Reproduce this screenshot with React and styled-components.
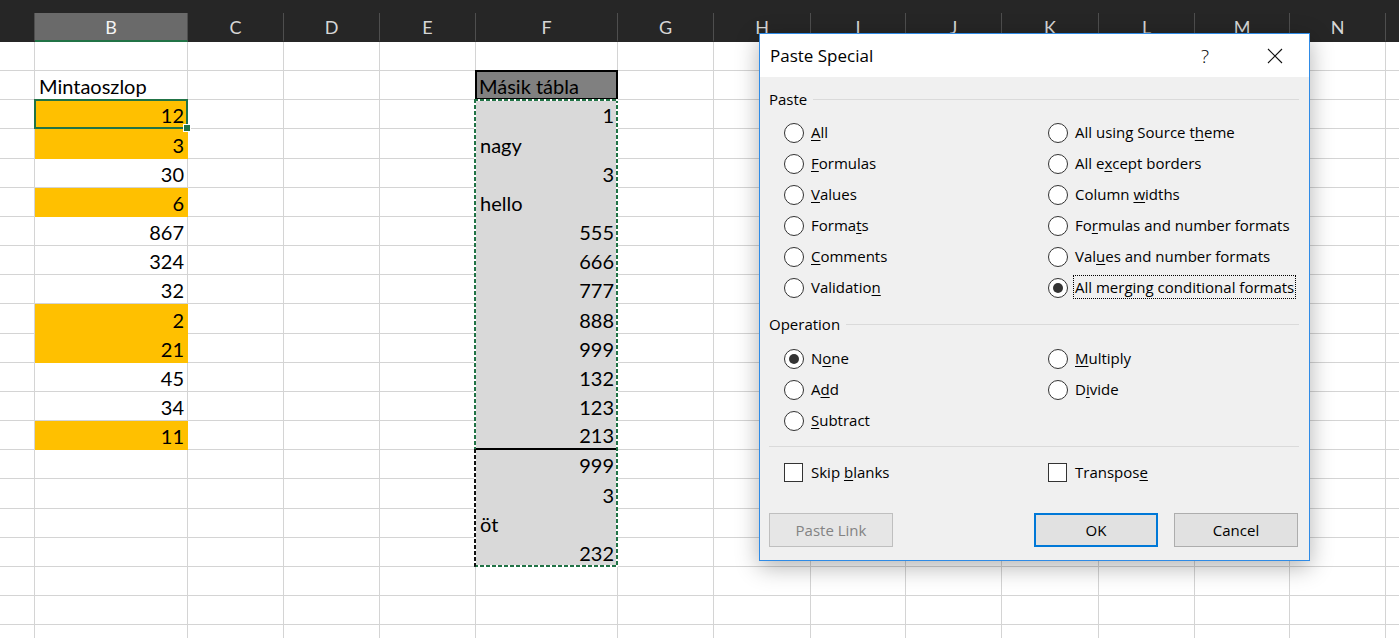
import React from 'react';
import styled, { createGlobalStyle } from 'styled-components';

const GlobalStyle = createGlobalStyle`
  html, body { margin: 0; padding: 0; background: #fff; }
  body { width: 1399px; height: 638px; overflow: hidden; }
`;

const SHEET_FONT = `Lato, "Liberation Sans", sans-serif`;
const UI_FONT = `"Open Sans", "Noto Sans", "Liberation Sans", sans-serif`;
const ROW_H = 29.17;
const ROWS = 21;

const Page = styled.div`
  position: relative;
  width: 1399px;
  height: 638px;
  overflow: hidden;
  background: #fff;
`;

const TopStrip = styled.div`
  height: 13px;
  background: #262626;
`;

const Sheet = styled.div`
  display: flex;
  align-items: flex-start;
`;

const Column = styled.div`
  flex: 0 0 ${(p) => p.$w}px;
  width: ${(p) => p.$w}px;
  display: flex;
  flex-direction: column;
`;

const ColHeader = styled.div`
  box-sizing: border-box;
  height: 29px;
  display: flex;
  align-items: center;
  justify-content: center;
  background: ${(p) => (p.$active ? '#6a6a6a' : '#262626')};
  color: ${(p) => (p.$active ? '#f4f4f4' : '#d6d6d6')};
  border-right: 1px solid #4e4e4e;
  border-bottom: 2px solid ${(p) => (p.$active ? '#217346' : '#262626')};
  font-family: ${SHEET_FONT};
  font-size: 18px;
  padding-top: 1px;
`;

const Cell = styled.div`
  position: relative;
  box-sizing: border-box;
  height: ${ROW_H}px;
  display: flex;
  align-items: flex-end;
  justify-content: ${(p) => (p.$num ? 'flex-end' : 'flex-start')};
  padding: 0 3px 1px 4px;
  background: ${(p) => p.$fill || '#fff'};
  border-right: 1px solid ${(p) => p.$fill || '#d4d4d4'};
  border-bottom: ${(p) =>
    p.$thick ? '2px solid #000' : `1px solid ${p.$fill || '#d4d4d4'}`};
  font-family: ${SHEET_FONT};
  font-size: 20px;
  line-height: 24px;
  color: #000;
  white-space: nowrap;
`;

const TableHead = styled(Cell)`
  z-index: 2;
  padding-left: 3px;
  &::after {
    content: '';
    position: absolute;
    left: -1px;
    right: -1px;
    top: -1px;
    bottom: -1px;
    border: 2px solid #000;
  }
`;

const Selection = styled.div`
  position: absolute;
  left: -1px;
  right: -1px;
  top: -1px;
  bottom: -1px;
  border: 2px solid #217346;
  pointer-events: none;
  z-index: 3;
`;

const FillHandle = styled.div`
  position: absolute;
  right: -5px;
  bottom: -5px;
  width: 6px;
  height: 6px;
  background: #217346;
  border: 1px solid #fff;
`;

const CopyRange = styled.div`
  position: relative;
  display: flex;
  flex-direction: column;
`;

const dash = (dir, c) =>
  `repeating-linear-gradient(${dir}, ${c} 0 4px, #fff 4px 6px)`;

const Marquee = styled.div`
  position: absolute;
  left: -2px;
  right: 0;
  top: -1px;
  bottom: 0;
  pointer-events: none;
  z-index: 4;
  background:
    ${dash('180deg', '#111')} left bottom / 2px ${ROW_H * 4 + 1}px no-repeat,
    ${dash('90deg', '#217346')} left top / 100% 2px no-repeat,
    ${dash('90deg', '#217346')} left bottom / 100% 2px no-repeat,
    ${dash('180deg', '#217346')} right top / 2px 100% no-repeat,
    ${dash('180deg', '#217346')} left top / 2px 100% no-repeat;
`;

/* ---------- dialog ---------- */

const Dialog = styled.div`
  position: absolute;
  left: 759px;
  top: 33px;
  width: 551px;
  height: 528px;
  box-sizing: border-box;
  border: 1px solid #2f8be6;
  background: #f0f0f0;
  box-shadow: 0 6px 22px rgba(0, 0, 0, 0.3);
  display: flex;
  flex-direction: column;
  font-family: ${UI_FONT};
  font-size: 15px;
  color: #000;
  z-index: 10;
`;

const TitleBar = styled.div`
  height: 43px;
  flex: 0 0 43px;
  background: #fff;
  display: flex;
  align-items: center;
  padding: 0 11px 0 10px;
`;

const Title = styled.div`
  font-size: 17px;
  flex: 1;
  margin-top: -1px;
`;

const TitleButton = styled.div`
  width: 46px;
  height: 36px;
  display: flex;
  align-items: center;
  justify-content: center;
  font-size: 19px;
  font-weight: 300;
  margin-left: ${(p) => p.$gap || 0}px;
`;

const Body = styled.div`
  flex: 1;
  display: flex;
  flex-direction: column;
  padding: 0 10px 0 9px;
`;

const GroupHeader = styled.div`
  display: flex;
  align-items: center;
  height: 20px;
  margin-top: ${(p) => p.$mt}px;
  &::after {
    content: '';
    flex: 1;
    height: 1px;
    background: #dadada;
    margin-left: 6px;
  }
`;

const OptionGrid = styled.div`
  display: grid;
  grid-template-columns: 264px 1fr;
  grid-auto-rows: 31px;
  grid-auto-flow: ${(p) => (p.$byColumn ? 'column' : 'row')};
  grid-template-rows: ${(p) => (p.$rows ? `repeat(${p.$rows}, 31px)` : 'none')};
  padding-left: 15px;
  margin-top: ${(p) => p.$mt || 0}px;
`;

const Option = styled.label`
  display: flex;
  align-items: center;
  gap: 7px;
  white-space: nowrap;
`;

const RadioCircle = styled.span`
  box-sizing: border-box;
  width: 20px;
  height: 20px;
  flex: 0 0 20px;
  border-radius: 50%;
  border: 1px solid #333;
  background: #fff;
  display: flex;
  align-items: center;
  justify-content: center;
  &::after {
    content: '';
    width: 10px;
    height: 10px;
    border-radius: 50%;
    background: ${(p) => (p.$checked ? '#333' : 'transparent')};
  }
`;

const CheckBox = styled.span`
  box-sizing: border-box;
  width: 19px;
  height: 19px;
  flex: 0 0 19px;
  border: 1px solid #333;
  background: #fff;
  margin-right: 1px;
`;

const OptionText = styled.span`
  padding: 0 1px;
  border: 1px dotted ${(p) => (p.$focus ? '#000' : 'transparent')};
  margin-left: -2px;
  line-height: 22px;
  margin-top: -1px;
  u {
    text-decoration: underline;
    text-underline-offset: 2px;
  }
`;

const Separator = styled.div`
  height: 1px;
  background: #dadada;
  margin-top: ${(p) => p.$mt}px;
`;

const ButtonRow = styled.div`
  display: flex;
  margin-top: 25px;
  padding-right: 1px;
`;

const Button = styled.div`
  box-sizing: border-box;
  width: 124px;
  height: 34px;
  display: flex;
  align-items: center;
  justify-content: center;
  padding-bottom: 1px;
  background: ${(p) => (p.$disabled ? '#e6e6e6' : '#e1e1e1')};
  color: ${(p) => (p.$disabled ? '#838383' : '#000')};
  border: ${(p) =>
    p.$primary ? '2px solid #0078d7' : `1px solid ${p.$disabled ? '#bfbfbf' : '#adadad'}`};
  margin-left: ${(p) => p.$ml || 0}px;
  font-size: 15px;
`;

const Spacer = styled.div`
  flex: 1;
`;

/* ---------- data ---------- */

const COLUMNS = [
  ['A', 35], ['B', 153], ['C', 96], ['D', 96], ['E', 96], ['F', 142], ['G', 96],
  ['H', 97], ['I', 95], ['J', 96], ['K', 97], ['L', 96], ['M', 95], ['N', 96], ['O', 96],
];

const HIDDEN_LABELS = ['A', 'O'];

const ORANGE = '#ffc000';
const GREY = '#d9d9d9';

const B_DATA = {
  2: { v: 'Mintaoszlop' },
  3: { v: 12, num: true, fill: ORANGE, selected: true },
  4: { v: 3, num: true, fill: ORANGE },
  5: { v: 30, num: true },
  6: { v: 6, num: true, fill: ORANGE },
  7: { v: 867, num: true },
  8: { v: 324, num: true },
  9: { v: 32, num: true },
  10: { v: 2, num: true, fill: ORANGE },
  11: { v: 21, num: true, fill: ORANGE },
  12: { v: 45, num: true },
  13: { v: 34, num: true },
  14: { v: 11, num: true, fill: ORANGE },
};

const F_RANGE = [1, 'nagy', 3, 'hello', 555, 666, 777, 888, 999, 132, 123, 213, 999, 3, 'öt', 232];

const rowNums = Array.from({ length: ROWS }, (_, i) => i + 1);

function PlainColumn({ data = {} }) {
  return rowNums.map((r) => {
    const d = data[r];
    if (!d) return <Cell key={r} />;
    return (
      <Cell key={r} $num={d.num} $fill={d.fill}>
        {d.v}
        {d.selected && (
          <Selection>
            <FillHandle />
          </Selection>
        )}
      </Cell>
    );
  });
}

function FColumn() {
  return (
    <>
      <Cell />
      <TableHead $fill="#808080">Másik tábla</TableHead>
      <CopyRange>
        {F_RANGE.map((v, i) => (
          <Cell key={i} $num={typeof v === 'number'} $fill={GREY} $thick={i === 11}>
            {v}
          </Cell>
        ))}
        <Marquee />
      </CopyRange>
      {rowNums.slice(18).map((r) => (
        <Cell key={r} />
      ))}
    </>
  );
}

const PASTE_OPTIONS = [
  [<><u>A</u>ll</>],
  [<><u>F</u>ormulas</>],
  [<><u>V</u>alues</>],
  [<>Forma<u>t</u>s</>],
  [<><u>C</u>omments</>],
  [<>Validatio<u>n</u></>],
  [<>All using Source t<u>h</u>eme</>],
  [<>All e<u>x</u>cept borders</>],
  [<>Column <u>w</u>idths</>],
  [<>Fo<u>r</u>mulas and number formats</>],
  [<>Val<u>u</u>es and number formats</>],
  [<>All mer<u>g</u>ing conditional formats</>, true],
];

const OP_OPTIONS = [
  [<>N<u>o</u>ne</>, true],
  [<>A<u>d</u>d</>],
  [<><u>S</u>ubtract</>],
  [<><u>M</u>ultiply</>],
  [<>D<u>i</u>vide</>],
];

function CloseIcon() {
  return (
    <svg width="16" height="16" viewBox="0 0 16 16">
      <path d="M1 1 L15 15 M15 1 L1 15" stroke="#111" strokeWidth="1.1" fill="none" />
    </svg>
  );
}

function PasteSpecial() {
  return (
    <Dialog>
      <TitleBar>
        <Title>Paste Special</Title>
        <TitleButton>?</TitleButton>
        <TitleButton $gap={24}>
          <CloseIcon />
        </TitleButton>
      </TitleBar>
      <Body>
        <GroupHeader $mt={12}>Paste</GroupHeader>
        <OptionGrid $mt={8} $rows={6} $byColumn>
          {PASTE_OPTIONS.map(([label, checked], i) => (
            <Option key={i}>
              <RadioCircle $checked={checked} />
              <OptionText $focus={checked}>{label}</OptionText>
            </Option>
          ))}
        </OptionGrid>
        <GroupHeader $mt={11}>Operation</GroupHeader>
        <OptionGrid $mt={9} $rows={3} $byColumn>
          {OP_OPTIONS.map(([label, checked], i) => (
            <Option key={i}>
              <RadioCircle $checked={checked} />
              <OptionText>{label}</OptionText>
            </Option>
          ))}
        </OptionGrid>
        <Separator $mt={10} />
        <OptionGrid $mt={10}>
          <Option>
            <CheckBox />
            <OptionText>
              Skip <u>b</u>lanks
            </OptionText>
          </Option>
          <Option>
            <CheckBox />
            <OptionText>
              Transpos<u>e</u>
            </OptionText>
          </Option>
        </OptionGrid>
        <ButtonRow>
          <Button $disabled>Paste Link</Button>
          <Spacer />
          <Button $primary>OK</Button>
          <Button $ml={16}>Cancel</Button>
        </ButtonRow>
      </Body>
    </Dialog>
  );
}

export default function App() {
  return (
    <Page>
      <GlobalStyle />
      <TopStrip />
      <Sheet>
        {COLUMNS.map(([id, w]) => (
          <Column key={id} $w={w}>
            <ColHeader $active={id === 'B'}>{HIDDEN_LABELS.includes(id) ? '' : id}</ColHeader>
            {id === 'F' ? <FColumn /> : <PlainColumn data={id === 'B' ? B_DATA : {}} />}
          </Column>
        ))}
      </Sheet>
      <PasteSpecial />
    </Page>
  );
}
